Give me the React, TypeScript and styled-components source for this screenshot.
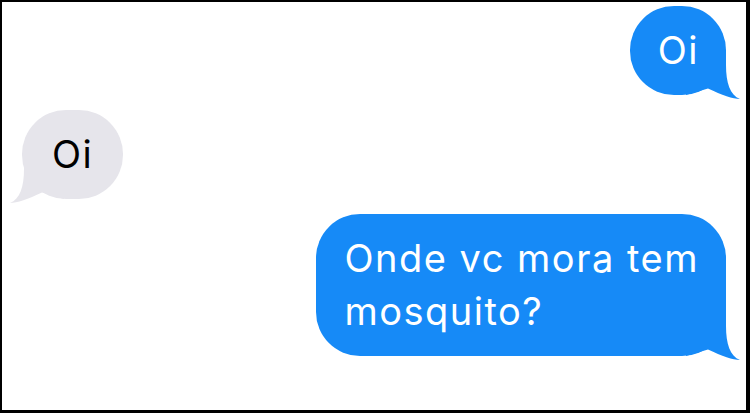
import React from "react";
import styled, { createGlobalStyle } from "styled-components";

const GlobalStyle = createGlobalStyle`
  html, body {
    margin: 0;
    padding: 0;
    background: #ffffff;
  }
`;

const BLUE = "#168af7";
const GRAY = "#e6e5eb";

const Frame = styled.div`
  width: 750px;
  height: 413px;
  box-sizing: border-box;
  border-style: solid;
  border-color: #000000;
  border-width: 2px 4px 3px 2px;
  background: #ffffff;
  padding: 4px 20px 0 20px;
  display: flex;
  flex-direction: column;
  gap: 15px;
  font-family: Inter, "Liberation Sans", sans-serif;
`;

type Side = "me" | "them";

const Bubble = styled.div<{ $side: Side }>`
  position: relative;
  align-self: ${(p) => (p.$side === "me" ? "flex-end" : "flex-start")};
  box-sizing: border-box;
  padding: ${(p) => (p.$side === "me" ? "18px 27px 18px 28px" : "18px 30px 18px 30px")};
  border-radius: 44px;
  background: ${(p) => (p.$side === "me" ? BLUE : GRAY)};
  color: ${(p) => (p.$side === "me" ? "#ffffff" : "#000000")};
  font-size: 38px;
  line-height: 53px;
  letter-spacing: 1.5px;
  white-space: nowrap;
`;

const Text = styled.span`
  position: relative;
  z-index: 1;
`;

const TailSvg = styled.svg<{ $side: Side }>`
  position: absolute;
  bottom: -4px;
  width: 60px;
  height: 60px;
  ${(p) =>
    p.$side === "me"
      ? "right: -14px;"
      : "left: -12px; transform: scaleX(-1);"}
`;

const Tail = ({ side, color }: { side: Side; color: string }) => (
  <TailSvg $side={side} viewBox="0 0 60 60">
    <path
      d="M6 11 L46 11 L46 26 C46 44 50 56 60 60 C53 60 42 56 28 49.5 L6 56 Z"
      fill={color}
    />
  </TailSvg>
);

type MessageProps = {
  side: Side;
  children: React.ReactNode;
};
const Message = ({ side, children }: MessageProps) => (
  <Bubble $side={side}>
    <Text>{children}</Text>
    <Tail side={side} color={side === "me" ? BLUE : GRAY} />
  </Bubble>
);

export default function App() {
  return (
    <>
      <GlobalStyle />
      <Frame>
        <Message side="me">Oi</Message>
        <Message side="them">Oi</Message>
        <Message side="me">
          Onde vc mora tem
          <br />
          mosquito?
        </Message>
      </Frame>
    </>
  );
}
